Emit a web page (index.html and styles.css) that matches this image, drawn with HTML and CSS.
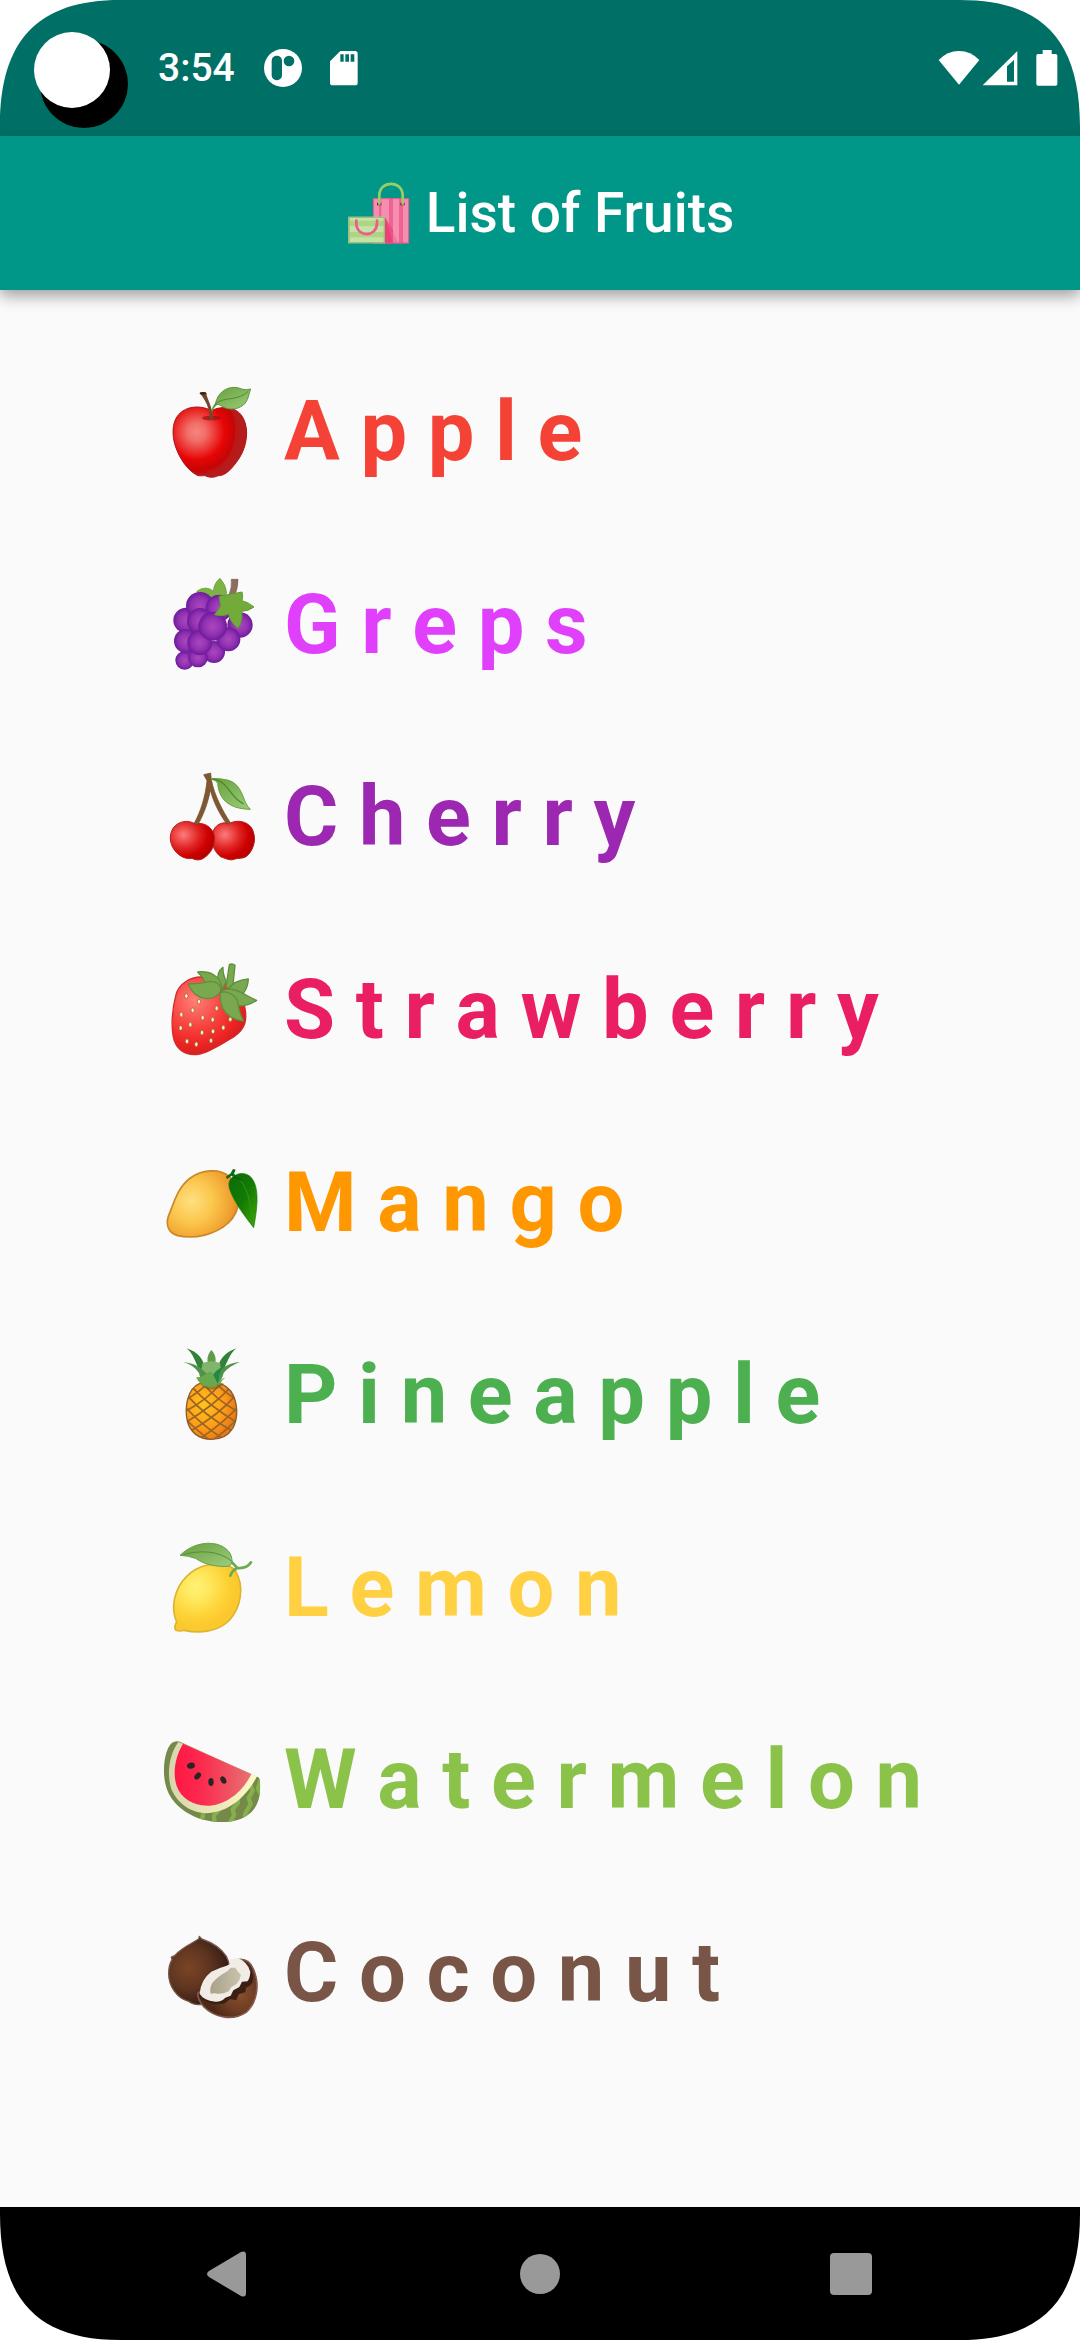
FILE: index.html
```html
<!DOCTYPE html>
<html lang="en">
<head>
<meta charset="utf-8">
<meta name="viewport" content="width=device-width, initial-scale=1">
<title>List of Fruits</title>
<link rel="stylesheet" href="styles.css">
</head>
<body>
<div class="screen">
  <div class="status-bar">
    <svg class="camera" width="106" height="98" viewBox="0 0 106 98" aria-hidden="true">
      <circle cx="61" cy="64" r="44" fill="#000" transform="translate(1 -10)"/>
      <circle cx="50" cy="40" r="38" fill="#fff"/>
    </svg>
    <span class="time">3:54</span>
    <svg width="38" height="38" viewBox="0 0 114 114" aria-hidden="true">
      <circle cx="57" cy="57" r="57" fill="#fff"/>
      <rect x="23" y="20" width="31" height="74" rx="15" fill="#007066"/>
      <circle cx="75" cy="36" r="16" fill="#007066"/>
    </svg>
    <svg class="sd-card" width="28" height="36" viewBox="0 0 84 108" aria-hidden="true">
      <path fill="#fff" fill-rule="evenodd" d="M31 3H75Q83 3 83 11V98Q83 106 75 106H8Q0 106 0 98V34ZM31 13V35H41V13ZM46 13V35H57V13ZM62 13V35H73V13Z"/>
    </svg>
    <div class="status-right">
      <svg width="42" height="36" viewBox="0 0 126 108" aria-hidden="true">
        <path fill="#fff" d="M2 30Q28 3 63 3T124 30L63 104Z"/>
      </svg>
      <svg width="36" height="36" viewBox="0 0 108 108" aria-hidden="true">
        <path fill="#fff" fill-rule="evenodd" d="M106 3V106H2ZM96 30L75 49V95H96Z"/>
      </svg>
      <svg class="battery" width="22" height="36" viewBox="0 0 66 108" aria-hidden="true">
        <path fill="#fff" d="M20 0H47V12H59Q64 12 64 17V102Q64 107 59 107H6Q1 107 1 102V17Q1 12 6 12H20Z"/>
      </svg>
    </div>
  </div>

  <header class="app-bar">
    <svg width="64" height="64" viewBox="75 155 192 192" aria-hidden="true">
      <path fill="#f48fb1" d="M156 207H264V342H156Z"/>
      <path fill="#f06292" d="M174 207H181V342H174ZM204 207H216V342H204ZM234 207H246V342H234Z"/>
      <path fill="#ec407a" d="M192 264L216 305V342H192Z"/>
      <path fill="#f06292" opacity=".5" d="M192 264L232 342H216Z"/>
      <path fill="none" stroke="#e25a8a" stroke-width="3" d="M157 208H263V341H157Z"/>
      <path fill="#880e4f" d="M168 220H181V228H168ZM238 220H251V228H238Z"/>
      <path fill="none" stroke="#9ccc65" stroke-width="8" stroke-linecap="round" d="M175 223V199C175 152 245 152 245 199V223"/>
      <path fill="#c5e1a5" d="M82 262H192V342H82Z"/>
      <path fill="#aed581" d="M82 274H192V290H82ZM82 308H192V324H82Z"/>
      <path fill="none" stroke="#9bbf78" stroke-width="4" d="M84 264H190V340H84Z"/>
      <path fill="none" stroke="#ec5a90" stroke-width="8" stroke-linecap="round" d="M106 274V282C106 325 168 325 168 282V274"/>
    </svg>
    <h1 class="title">List of Fruits</h1>
  </header>

  <main class="content">
    <ul class="fruits">
      <li class="fruit apple">
        <svg class="icon" viewBox="36 36 300 300" aria-hidden="true">
          <defs>
            <radialGradient id="apple-skin" gradientUnits="userSpaceOnUse" cx="140" cy="186" r="135">
              <stop offset="0" stop-color="#f6857f"/><stop offset=".2" stop-color="#f26f69"/><stop offset=".62" stop-color="#e60505"/><stop offset=".85" stop-color="#c60505"/><stop offset="1" stop-color="#b71c1c"/>
            </radialGradient>
            <linearGradient id="leaf" x1="0" y1="0" x2="1" y2="1"><stop offset="0" stop-color="#68a03b"/><stop offset="1" stop-color="#9ccc7d"/></linearGradient>
          </defs>
          <path fill="url(#apple-skin)" stroke="#a81818" stroke-width="3" d="M184 122C160 108 122 106 97 124C66 145 64 190 76 228C88 265 112 300 140 315C150 320 158 316 166 317C178 324 196 322 204 317C226 319 248 294 268 264C290 230 298 180 280 145C264 112 220 104 184 122Z"/>
          <path fill="#b71c1c" opacity=".75" d="M238 114C272 125 290 152 289 192C286 240 250 292 222 312C204 320 180 312 172 304C210 302 240 262 250 222C260 182 258 140 238 114Z"/>
          <ellipse cx="184" cy="144" rx="28" ry="7" fill="#9b1010" opacity=".7"/>
          <path fill="#71482a" d="M149 70Q158 64 169 69C171 88 187 108 190 147Q184 153 179 147C180 116 165 87 149 70Z"/>
          <ellipse cx="159" cy="70" rx="10" ry="4" fill="#3e2415"/>
          <path fill="#5e9b36" d="M184 126Q186 108 199 96L205 103Q190 112 188 124Z"/>
          <path fill="url(#leaf)" stroke="#5f943c" stroke-width="3" d="M196 103C204 60 242 42 278 58Q290 61 302 57C294 78 296 90 280 105C258 122 230 120 211 106Q204 101 196 103Z"/>
          <path fill="none" stroke="#558b2f" stroke-width="3" d="M196 101C224 79 264 94 295 64"/>
        </svg>
        <span>A p p l e</span>
      </li>
      <li class="fruit grapes">
        <svg class="icon" viewBox="36 44 300 300" aria-hidden="true">
          <defs>
            <radialGradient id="grape"><stop offset="0" stop-color="#ab47bc"/><stop offset=".6" stop-color="#9232b3"/><stop offset="1" stop-color="#6d1b9a"/></radialGradient>
          </defs>
          <path fill="#7cb342" stroke="#5f943c" stroke-width="2" d="M140 93Q167 74 190 92Q192 68 210 54Q228 73 230 98L214 124L170 120Z"/>
          <g fill="url(#grape)">
            <circle cx="270" cy="194" r="38"/><circle cx="192" cy="275" r="33"/>
            <circle cx="104" cy="300" r="28"/><circle cx="144" cy="291" r="30"/>
            <circle cx="108" cy="180" r="38"/><circle cx="108" cy="242" r="36"/>
            <circle cx="150" cy="137" r="42"/><circle cx="207" cy="143" r="40"/>
            <circle cx="150" cy="182" r="39"/><circle cx="235" cy="237" r="36"/>
            <circle cx="149" cy="247" r="37"/><circle cx="188" cy="198" r="43"/>
          </g>
          <path fill="#8d6e63" stroke="#795548" stroke-width="2" d="M244 57H264Q264 84 252 112L236 106Q247 82 244 57Z"/>
          <path fill="#72ab3a" stroke="#63983a" stroke-width="3" d="M207 108Q240 102 276 95Q280 108 276 121Q296 126 312 140Q294 153 275 153Q280 180 264 204Q241 187 236 162Q216 170 193 163Q204 151 212 137Z"/>
        </svg>
        <span>G r e p s</span>
      </li>
      <li class="fruit cherry">
        <svg class="icon" viewBox="36 621 300 300" aria-hidden="true">
          <defs>
            <radialGradient id="cherry-skin" cx=".3" cy=".35" r=".7"><stop offset="0" stop-color="#ff7b7b"/><stop offset=".5" stop-color="#df2323"/><stop offset=".8" stop-color="#cc0000"/><stop offset="1" stop-color="#b80000"/></radialGradient>
          </defs>
          <path fill="url(#cherry-skin)" stroke="#b71c1c" stroke-width="3" d="M238 791C260 778 290 783 305 804C321 832 313 867 292 887C278 898 264 893 252 898C238 903 225 894 213 891C192 876 182 848 188 819C193 795 217 783 238 791Z"/>
          <path fill="url(#cherry-skin)" stroke="#b71c1c" stroke-width="3" d="M136 792C157 785 186 799 192 824C198 856 182 880 163 893C150 902 138 901 126 895C112 898 95 893 80 878C61 860 54 829 69 805C84 783 115 778 136 792Z"/>
          <path fill="#80582f" stroke="#6b4a2b" stroke-width="2" d="M161 644L182 639L184 658C192 705 220 756 241 788L231 793C210 765 190 727 181 690C174 730 159 768 143 795L133 789C152 754 166 710 171 662Z"/>
          <path fill="url(#leaf)" stroke="#689f38" stroke-width="3" d="M186 656Q210 654 236 661C280 674 277 728 301 748C260 747 208 735 203 670Q198 659 186 658Z"/>
          <path fill="none" stroke="#4b8a2b" stroke-width="4" d="M187 657C236 662 236 710 281 732"/>
        </svg>
        <span>C h e r r y</span>
      </li>
      <li class="fruit strawberry">
        <svg class="icon" viewBox="36 58 300 300" aria-hidden="true">
          <defs>
            <radialGradient id="berry" gradientUnits="userSpaceOnUse" cx="135" cy="180" r="165"><stop offset="0" stop-color="#ff8078"/><stop offset=".5" stop-color="#f8413e"/><stop offset=".8" stop-color="#ee2424"/><stop offset="1" stop-color="#d51e20"/></radialGradient>
          </defs>
          <path fill="url(#berry)" stroke="#d32b2b" stroke-width="4" d="M156 109C120 108 86 130 78 162C68 200 64 250 69 284C76 326 104 346 145 341C175 337 216 310 252 288C288 264 292 236 284 198L244 130Z"/>
          <g fill="#fff3c4" stroke="#8d5c26" stroke-width="2">
            <ellipse cx="109" cy="166" rx="5" ry="7"/><ellipse cx="147" cy="183" rx="5" ry="7"/><ellipse cx="128" cy="209" rx="5" ry="7"/><ellipse cx="94" cy="222" rx="5" ry="7"/><ellipse cx="158" cy="231" rx="5" ry="7"/><ellipse cx="200" cy="203" rx="5" ry="7"/><ellipse cx="188" cy="237" rx="5" ry="7"/><ellipse cx="121" cy="252" rx="5" ry="7"/><ellipse cx="92" cy="262" rx="5" ry="7"/><ellipse cx="156" cy="276" rx="5" ry="7"/><ellipse cx="189" cy="272" rx="5" ry="7"/><ellipse cx="220" cy="261" rx="5" ry="7"/><ellipse cx="241" cy="236" rx="5" ry="7"/><ellipse cx="111" cy="302" rx="5" ry="7"/><ellipse cx="139" cy="311" rx="5" ry="7"/><ellipse cx="183" cy="300" rx="5" ry="7"/>
          </g>
          <g fill="#79a84f" stroke="#5f9040" stroke-width="4" stroke-linejoin="round">
            <path d="M238 72Q247 67 255 74L248 142L228 140Z"/>
            <path d="M204 122Q200 94 219 80Q218 104 229 121L216 148Z"/>
            <path d="M232 150Q250 118 295 115Q294 140 280 158Z"/>
            <path d="M143 94C180 90 212 106 216 142L206 152Q166 136 157 110Z"/>
            <path d="M216 150C252 134 284 164 320 179C292 198 254 204 236 178Z"/>
            <path d="M114 130Q150 130 180 122C204 122 214 136 212 152C190 184 138 184 114 130Z"/>
            <path d="M211 156C238 146 266 172 265 195Q268 218 281 241C240 236 206 212 211 156Z"/>
          </g>
        </svg>
        <span>S t r a w b e r r y</span>
      </li>
      <li class="fruit mango">
        <svg class="icon" viewBox="36 636 300 300" aria-hidden="true">
          <defs>
            <radialGradient id="mango-skin" gradientUnits="userSpaceOnUse" cx="125" cy="780" r="160"><stop offset="0" stop-color="#ffe082"/><stop offset=".4" stop-color="#fbc64c"/><stop offset=".75" stop-color="#f0a030"/><stop offset="1" stop-color="#e07a1f"/></radialGradient>
            <linearGradient id="mango-leaf" x1="0" y1="0" x2="1" y2="1"><stop offset="0" stop-color="#0a6b0a"/><stop offset=".5" stop-color="#137a05"/><stop offset="1" stop-color="#43a805"/></linearGradient>
          </defs>
          <path fill="url(#mango-skin)" stroke="#c98726" stroke-width="5" d="M238 706C205 680 154 687 121 711C82 740 72 786 55 826C46 856 58 876 83 884C135 896 197 880 235 846C270 812 284 748 238 706Z"/>
          <path fill="#0b6b10" d="M227 708L242 697L249 684L257 686L252 698L260 706L252 709L244 704L232 714Z"/>
          <path fill="url(#mango-leaf)" stroke="#0c7a0a" stroke-width="2" d="M240 718C252 698 280 690 300 706C326 731 326 780 311 860C286 828 254 786 240 748C235 734 236 724 240 718Z"/>
          <path fill="none" stroke="#0b5c0b" stroke-width="4" d="M248 709Q263 708 275 720"/>
          <path fill="none" stroke="#2f9a0a" stroke-width="3" d="M270 718C300 750 300 800 309 845"/>
        </svg>
        <span>M a n g o</span>
      </li>
      <li class="fruit pineapple">
        <svg class="icon" viewBox="36 44 300 300" aria-hidden="true">
          <defs>
            <radialGradient id="pine-skin" cx=".35" cy=".4" r=".65"><stop offset="0" stop-color="#ffc31c"/><stop offset=".6" stop-color="#ff9d17"/><stop offset="1" stop-color="#e97914"/></radialGradient>
            <clipPath id="pine-clip"><path d="M148 160C180 148 220 154 242 182C264 214 266 262 248 294C232 320 206 327 184 327C150 326 122 309 112 272C103 230 112 176 148 160Z"/></clipPath>
          </defs>
          <path fill="url(#pine-skin)" d="M148 160C180 148 220 154 242 182C264 214 266 262 248 294C232 320 206 327 184 327C150 326 122 309 112 272C103 230 112 176 148 160Z"/>
          <g fill="none" stroke="#9a6526" stroke-width="5" clip-path="url(#pine-clip)">
            <path d="M190 150Q220 185 264 210M158 158Q200 210 264 244M128 172Q176 226 264 278M112 196Q160 252 246 302M106 230Q150 280 214 322M106 266Q145 304 180 330"/>
            <path d="M182 150Q150 185 104 210M214 158Q170 210 104 244M240 172Q192 226 104 278M256 196Q208 252 122 302M264 230Q218 280 154 322M262 266Q223 304 188 330"/>
          </g>
          <path fill="none" stroke="#8d5b2a" stroke-width="4" d="M148 160C180 148 220 154 242 182C264 214 266 262 248 294C232 320 206 327 184 327C150 326 122 309 112 272C103 230 112 176 148 160Z"/>
          <path fill="#7a5724" opacity=".6" d="M150 160Q185 148 222 160Q206 178 184 178Q162 176 150 160Z"/>
          <path fill="#33803a" d="M110 54C146 66 160 88 166 116L150 124C136 96 130 70 110 54ZM259 54C225 66 208 88 202 116L218 124C232 96 238 72 259 54Z"/>
          <path fill="#5e9b4a" d="M184 59C200 76 198 92 194 104H176C169 88 172 74 184 59Z"/>
          <path fill="#81b56b" d="M158 98Q184 88 210 98L216 140L184 156L150 136Z"/>
          <path fill="#4f9448" d="M99 95C138 98 164 118 178 142L184 166Q150 158 147 128Q132 104 99 95ZM270 95C236 98 210 112 194 142L188 164Q216 156 221 128Q236 108 270 95Z"/>
          <path fill="#1f8a45" d="M222 108Q190 122 186 142L206 160Q202 132 222 108Z"/>
          <path fill="#6aa84f" d="M139 140Q156 142 164 134Q178 120 186 126L206 166Q180 174 160 166Q142 154 139 140ZM226 142Q206 146 200 168L214 160Q210 152 226 142Z"/>
        </svg>
        <span>P i n e a p p l e</span>
      </li>
      <li class="fruit lemon">
        <svg class="icon" viewBox="36 621 300 300" aria-hidden="true">
          <defs>
            <radialGradient id="lemon-skin" gradientUnits="userSpaceOnUse" cx="138" cy="768" r="120"><stop offset="0" stop-color="#fff176"/><stop offset=".3" stop-color="#ffe95f"/><stop offset=".8" stop-color="#fdd033"/><stop offset="1" stop-color="#fbc92d"/></radialGradient>
          </defs>
          <path fill="url(#lemon-skin)" stroke="#dbb430" stroke-width="5" d="M256 718C236 696 186 696 154 707C110 724 74 768 71 824C70 850 75 862 80 873Q70 889 78 898Q90 902 102 898C146 908 200 904 236 870C274 830 284 766 256 718Z"/>
          <path fill="none" stroke="#6aab4f" stroke-width="8" stroke-linecap="round" d="M242 690L262 711Q290 714 303 694M262 711Q246 718 241 734"/>
          <path fill="url(#leaf)" stroke="#68a04a" stroke-width="3" d="M90 673C120 644 162 630 202 640C232 650 246 668 246 690Q246 702 236 706C200 708 166 702 136 682Q116 674 90 673Z"/>
          <path fill="none" stroke="#558b3f" stroke-width="3" d="M100 671C150 656 210 660 244 690"/>
        </svg>
        <span>L e m o n</span>
      </li>
      <li class="fruit watermelon">
        <svg class="icon" viewBox="36 28 300 300" aria-hidden="true">
          <defs>
            <linearGradient id="melon-flesh"><stop offset="0" stop-color="#ff1744"/><stop offset=".35" stop-color="#fc2a4e"/><stop offset="1" stop-color="#e57373"/></linearGradient>
            <linearGradient id="melon-rind"><stop offset="0" stop-color="#d8d5ae"/><stop offset="1" stop-color="#fff9c4"/></linearGradient>
            <clipPath id="melon-clip"><path d="M90 63Q66 56 54 83C38 120 34 188 64 232C104 292 196 318 262 298C318 280 334 240 330 180Q328 168 320 168Z"/></clipPath>
          </defs>
          <g clip-path="url(#melon-clip)">
            <path fill="#75894a" d="M30 40H336V320H30Z"/>
            <path fill="none" stroke="#86b04b" stroke-width="13" stroke-linejoin="round" d="M300 190L308 210L296 232L302 250L286 278L284 304M332 176L324 204L334 224M262 226L264 246L248 266L252 284L238 310M210 250L208 266L192 284L194 312M160 272L158 290L146 310"/>
          </g>
          <path fill="url(#melon-rind)" d="M85 64L99 69L304 160L321 167C296 218 246 270 180 277C124 282 78 244 63 202C48 152 62 94 85 64Z"/>
          <path fill="url(#melon-flesh)" d="M99 69L304 160C280 210 234 250 180 255C132 258 92 232 80 196C66 154 78 104 99 69Z"/>
          <g fill="#262626"><ellipse cx="123" cy="135" rx="12" ry="9" transform="rotate(-15 123 135)"/><ellipse cx="143" cy="166" rx="12" ry="8" transform="rotate(-48 143 166)"/><ellipse cx="183" cy="184" rx="8" ry="12"/><ellipse cx="220" cy="178" rx="8" ry="12" transform="rotate(-28 220 178)"/></g>
        </svg>
        <span>W a t e r m e l o n</span>
      </li>
      <li class="fruit coconut">
        <svg class="icon" viewBox="36 606 300 300" aria-hidden="true">
          <defs>
            <radialGradient id="shell" gradientUnits="userSpaceOnUse" cx="116" cy="740" r="125"><stop offset="0" stop-color="#7a4526"/><stop offset=".5" stop-color="#5f3520"/><stop offset="1" stop-color="#321a12"/></radialGradient>
            <radialGradient id="half" gradientUnits="userSpaceOnUse" cx="270" cy="820" r="90"><stop offset="0" stop-color="#87502c"/><stop offset=".6" stop-color="#6b3b22"/><stop offset="1" stop-color="#4d2918"/></radialGradient>
            <linearGradient id="hollow"><stop offset="0" stop-color="#a9a188"/><stop offset="1" stop-color="#c9c3ae"/></linearGradient>
          </defs>
          <path fill="url(#shell)" stroke="#76574b" stroke-width="4" stroke-linejoin="round" d="M148 646L155 654C184 664 212 680 229 706Q245 736 238 780L156 850Q130 854 116 841C80 832 56 794 56 758Q56 732 66 716L64 708L74 704C92 682 124 668 146 654Z"/>
          <path fill="url(#half)" stroke="#80594b" stroke-width="5" d="M262 716Q296 710 310 744C330 790 322 844 288 874C246 902 192 888 162 858Q144 838 143 818Z"/>
          <path fill="#3c1f14" d="M298 740Q316 762 306 786Q300 796 288 800L286 814L266 820L258 838L240 834L222 848L196 850Q160 844 148 826Z"/>
          <path fill="#f1ece5" d="M264 711Q292 722 301 752Q300 772 292 781L276 782L268 798L250 808L242 824L226 830Q214 843 196 842Q160 838 149 818Q152 776 184 752Q208 740 230 734L241 728L240 716Z"/>
          <path fill="url(#hollow)" d="M232 751L242 740L256 740L263 751L273 761Q270 778 260 789L244 798L236 811Q214 822 196 817L182 818Q178 800 187 786Q204 766 232 751Z"/>
        </svg>
        <span>C o c o n u t</span>
      </li>
    </ul>
  </main>

  <nav class="nav-bar" aria-label="System">
    <button class="nav-button" type="button" aria-label="Back">
      <svg width="48" height="48" viewBox="0 0 48 48"><path fill="#999" d="M5 21L37 2Q42 0 42 5V43Q42 48 37 46L5 27Q1 24 5 21Z"/></svg>
    </button>
    <button class="nav-button" type="button" aria-label="Home">
      <svg width="48" height="48" viewBox="0 0 48 48"><circle cx="24" cy="24" r="20" fill="#999"/></svg>
    </button>
    <button class="nav-button" type="button" aria-label="Overview">
      <svg width="48" height="48" viewBox="0 0 48 48"><rect x="2" y="3" width="42" height="42" rx="4" fill="#999"/></svg>
    </button>
  </nav>

  <svg class="corner top-left" viewBox="0 0 126 126" aria-hidden="true"><path d="M0 0V126C0 40 38 0 120 0Z"/></svg>
  <svg class="corner top-right" viewBox="0 0 126 126" aria-hidden="true"><path d="M0 0V126C0 40 38 0 120 0Z"/></svg>
  <svg class="corner bottom-left" viewBox="0 0 126 126" aria-hidden="true"><path d="M0 0V126C0 40 38 0 120 0Z"/></svg>
  <svg class="corner bottom-right" viewBox="0 0 126 126" aria-hidden="true"><path d="M0 0V126C0 40 38 0 120 0Z"/></svg>
</div>
</body>
</html>
```
FILE: styles.css
```css
* { box-sizing: border-box; }

body {
  margin: 0;
  background: #fff;
  font-family: Roboto, "Noto Sans", sans-serif;
}

svg { display: block; flex: none; }

.screen {
  position: relative;
  display: flex;
  flex-direction: column;
  min-height: 100vh;
  background: #fafafa;
}

/* Status bar */
.status-bar {
  display: flex;
  align-items: center;
  height: 136px;
  padding: 0 22px;
  background: #007066;
  color: #fff;
}
.camera { margin: 22px 8px 0 0; }
.camera { margin-left: 0; }
.time {
  margin: 0 29px 0 22px;
  font-size: 39px;
  font-weight: 500;
  line-height: 48px;
}
.sd-card { margin-left: 28px; }
.status-right {
  display: flex;
  gap: 2px;
  margin-left: auto;
}
.battery { margin-left: 16px; }

/* App bar */
.app-bar {
  z-index: 1;
  display: flex;
  align-items: center;
  justify-content: center;
  gap: 16px;
  height: 154px;
  background: #009688;
  color: #fff;
  box-shadow: 0 6px 14px rgba(0, 0, 0, 0.36);
}
.title {
  margin: 0;
  font-size: 55px;
  font-weight: 500;
  line-height: 64px;
}

/* Fruit list */
.content {
  display: flex;
  flex: 1;
  padding: 46px 0 138px 162px;
}
.fruits {
  display: flex;
  flex: 1;
  flex-direction: column;
  margin: 0;
  padding: 0;
  list-style: none;
}
.fruit {
  display: flex;
  flex: 1;
  align-items: center;
  gap: 22px;
  font-size: 83px;
  font-weight: 700;
  line-height: 96px;
  white-space: nowrap;
}
.icon { width: 100px; height: 100px; }

.apple { color: #f44336; }
.grapes { color: #e040fb; }
.cherry { color: #9c27b0; }
.strawberry { color: #e91e63; }
.mango { color: #ff9800; }
.pineapple { color: #4caf50; }
.lemon { color: #ffd042; }
.watermelon { color: #8bc34a; }
.coconut { color: #795548; }

/* System navigation */
.nav-bar {
  display: flex;
  align-items: center;
  justify-content: center;
  gap: 192px;
  height: 133px;
  background: #000;
}
.nav-button {
  display: flex;
  justify-content: center;
  width: 120px;
  padding: 36px 0;
  border: 0;
  background: none;
}

/* Rounded display corners */
.corner {
  position: absolute;
  z-index: 2;
  width: 126px;
  height: 126px;
  fill: #fff;
}
.top-left { top: 0; left: 0; }
.top-right { top: 0; right: 0; transform: scaleX(-1); }
.bottom-left { bottom: 0; left: 0; transform: scaleY(-1); }
.bottom-right { right: 0; bottom: 0; transform: scale(-1); }
```
